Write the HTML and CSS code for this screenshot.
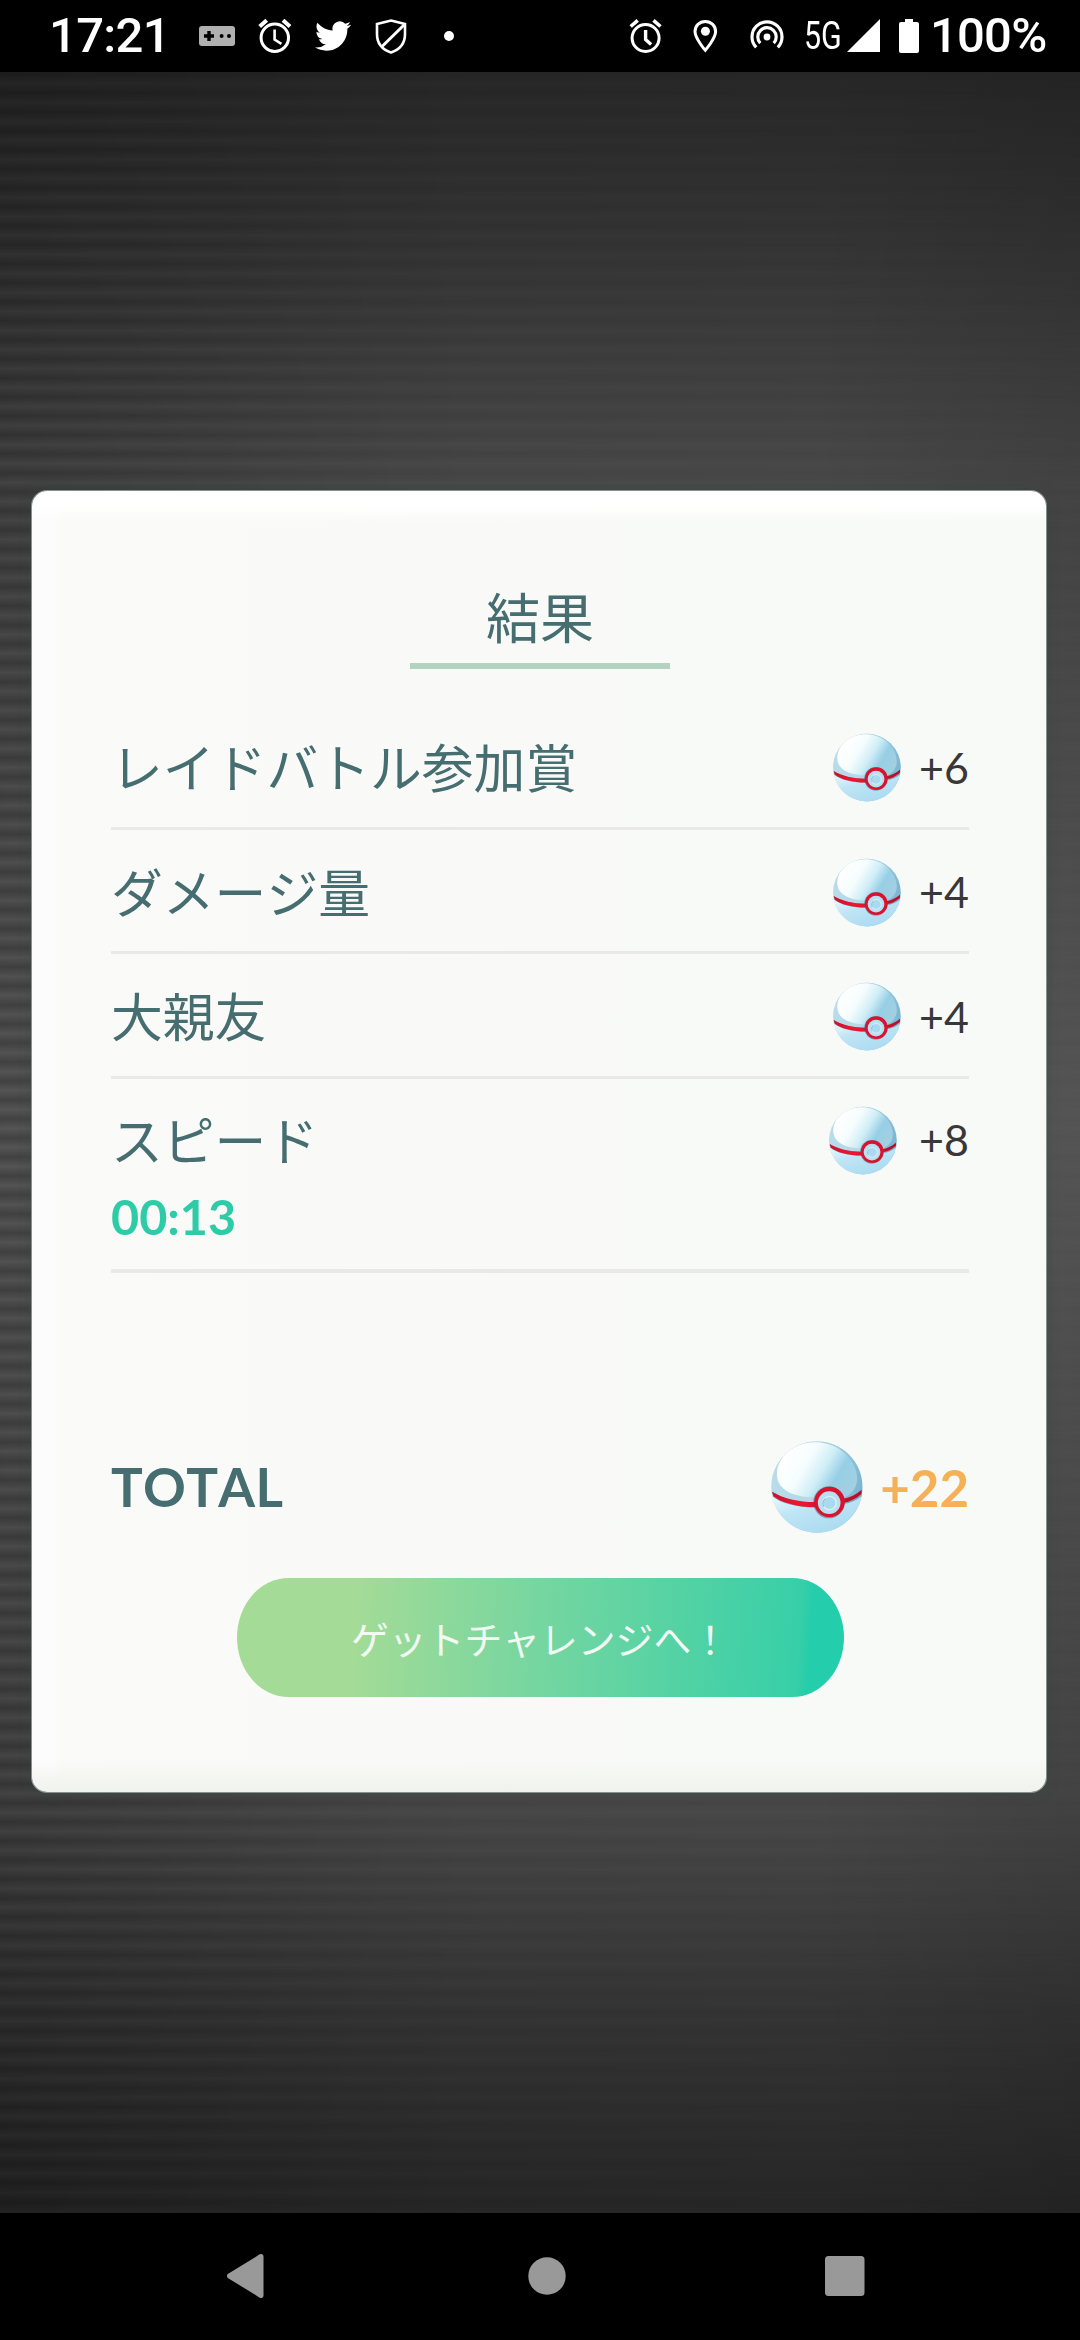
FILE: index.html
```html
<!DOCTYPE html>
<html lang="ja">
<head>
<meta charset="utf-8">
<title>結果</title>
<link rel="stylesheet" href="styles.css">
</head>
<body>
<svg class="defs" width="0" height="0" aria-hidden="true">
  <defs>
    <linearGradient id="shell" x1="0" y1="0.35" x2="1" y2="0.5">
      <stop offset="0" stop-color="#b9dcea"/>
      <stop offset="0.45" stop-color="#b4d9e8"/>
      <stop offset="1" stop-color="#79b4d2"/>
    </linearGradient>
    <linearGradient id="dome" x1="0.1" y1="0.25" x2="1" y2="0.62">
      <stop offset="0" stop-color="#ffffff"/>
      <stop offset="0.3" stop-color="#f6fdfe"/>
      <stop offset="0.55" stop-color="#cfeef6"/>
      <stop offset="0.76" stop-color="#97cfe6"/>
      <stop offset="1" stop-color="#a2cfe1"/>
    </linearGradient>
    <linearGradient id="base" x1="0" y1="0" x2="0.6" y2="0.9">
      <stop offset="0" stop-color="#f4fcff"/>
      <stop offset="0.5" stop-color="#bfe5f5"/>
      <stop offset="1" stop-color="#addcf1"/>
    </linearGradient>
    <linearGradient id="band" x1="0" y1="0" x2="1" y2="0">
      <stop offset="0" stop-color="#c9112c"/>
      <stop offset="0.3" stop-color="#f0162f"/>
      <stop offset="1" stop-color="#b50e28"/>
    </linearGradient>
    <clipPath id="round"><circle cx="229" cy="261" r="137"/></clipPath>
    <symbol id="ball" viewBox="92 123 275 276">
      <g clip-path="url(#round)">
        <rect x="92" y="122" width="276" height="280" fill="url(#shell)"/>
        <path d="M110 232C104 180 150 128 222 127c76-2 129 58 128 110-1 27-17 46-38 55H210c-50-2-95-22-100-60z" fill="url(#dome)"/>
        <path d="M92 280c30 22 75 36 136 37 60 1 108-14 140-40v125H92z" fill="url(#base)"/>
        <path d="M94 275c30 20 78 32 130 32h86c21-7 38-17 55-32l-1 13c-16 14-34 21-54 24l-86 10c-54 0-104-12-127-32z" fill="#44728f" opacity=".55"/>
        <path d="M95 275c32 20 78 31 130 31v16c-54 0-103-14-126-33zM308 296c21-4 38-12 56-27l-2 14c-17 14-33 22-54 26z" fill="url(#band)"/>
      </g>
      <ellipse cx="265" cy="307" rx="47" ry="48" fill="#315c79" opacity=".45"/>
      <circle cx="267" cy="306" r="46" fill="#d9122d"/>
      <circle cx="266" cy="308" r="34" fill="#b7e0f1"/>
      <circle cx="267" cy="309" r="20" fill="#abd9ef" stroke="#d8f2fc" stroke-width="4"/>
      <path d="M250 320a20 20 0 0 1 4-24" fill="none" stroke="#7db5d3" stroke-width="3"/>
    </symbol>
  </defs>
</svg>

<header class="status">
  <span class="clock">17:21</span>
  <div class="notices">
    <svg width="36" height="20" viewBox="0 0 36 20"><rect width="36" height="20" rx="3" fill="#b0b0b0"/><path d="M5 10h10M10 5v10" stroke="#000" stroke-width="3.4"/><circle cx="22.6" cy="10" r="2"/><circle cx="30" cy="10" r="2"/></svg>
    <svg width="34" height="36" viewBox="0 0 34 36" fill="none" stroke="#fff"><circle cx="16.8" cy="19.7" r="13.7" stroke-width="3"/><path d="M1.7 8.5l7-6.2M25 2.3l7 6.2" stroke-width="4"/><path d="M16.6 11.5v10l6.8 4.3" stroke-width="2.6"/></svg>
    <svg width="36" height="36" viewBox="0 0 24 24" fill="#fff"><path d="M23.953 4.57a10 10 0 01-2.825.775 4.958 4.958 0 002.163-2.723c-.951.555-2.005.959-3.127 1.184a4.92 4.92 0 00-8.384 4.482C7.69 8.095 4.067 6.13 1.64 3.162a4.822 4.822 0 00-.666 2.475c0 1.71.87 3.213 2.188 4.096a4.904 4.904 0 01-2.228-.616v.06a4.923 4.923 0 003.946 4.827 4.996 4.996 0 01-2.212.085 4.936 4.936 0 004.604 3.417 9.867 9.867 0 01-6.102 2.105c-.39 0-.779-.023-1.17-.067a13.995 13.995 0 007.557 2.209c9.053 0 13.998-7.496 13.998-13.985 0-.21 0-.42-.015-.63A9.935 9.935 0 0024 4.59z"/></svg>
    <svg width="34" height="36" viewBox="0 0 34 36" fill="none" stroke="#fff" stroke-width="2.6"><path d="M17 2.5L31 6v10c0 9-5 15.500-14 18.500C8 31.500 3 25 3 16V6z"/><path d="M30 7L8 28.500" stroke-width="3"/></svg>
    <svg class="more" width="10" height="10" viewBox="0 0 10 10"><circle cx="5" cy="5" r="5" fill="#fff"/></svg>
  </div>
  <div class="system">
    <svg width="34" height="36" viewBox="0 0 34 36" fill="none" stroke="#fff"><circle cx="16.600" cy="20" r="13.500" stroke-width="3"/><path d="M1.700 8.500l7-6.200M24.500 2.300l7 6.200" stroke-width="3.600"/><path d="M16.600 12v9.500l5.500 5" stroke-width="3.400"/></svg>
    <svg class="pin" width="27" height="36" viewBox="0 0 27 36"><path d="M13.300 3.400c-6 0-10.300 4.500-10.300 10.200 0 7 10.300 18.600 10.300 18.600s10.300-11.600 10.300-18.600c0-5.700-4.300-10.200-10.300-10.200z" fill="none" stroke="#fff" stroke-width="3"/><circle cx="13.400" cy="13.300" r="4.500" fill="#fff"/></svg>
    <svg class="spot" width="34" height="34" viewBox="0 0 34 34" fill="none" stroke="#fff" stroke-width="3.200"><path d="M6.200 28.300a15 15 0 1 1 21.600 0M10.300 24.200a9.200 9.200 0 1 1 13.400 0"/><circle cx="17" cy="18" r="3.400" fill="#fff" stroke="none"/></svg>
    <span class="net"><span>5G</span></span>
    <svg class="signal" width="34" height="34" viewBox="0 0 34 34"><path d="M0 33L33 0v33z" fill="#fff"/></svg>
    <svg class="battery" width="20" height="36" viewBox="0 0 20 36"><path d="M6 1h8v3h4a2 2 0 0 1 2 2v27a2 2 0 0 1-2 2H2a2 2 0 0 1-2-2V6a2 2 0 0 1 2-2h4z" fill="#fff"/></svg>
    <span class="level">100%</span>
  </div>
</header>

<main class="stage">
  <section class="card">
    <h1 class="title">結果</h1>
    <ul class="rows">
      <li class="row"><span class="label">レイドバトル参加賞</span><svg class="ball"><use href="#ball"/></svg><span class="count">+6</span></li>
      <li class="row"><span class="label">ダメージ量</span><svg class="ball"><use href="#ball"/></svg><span class="count">+4</span></li>
      <li class="row"><span class="label">大親友</span><svg class="ball"><use href="#ball"/></svg><span class="count">+4</span></li>
      <li class="row row-speed"><span class="label">スピード</span><svg class="ball"><use href="#ball"/></svg><span class="count">+8</span><span class="time">00:13</span></li>
    </ul>
    <div class="total"><span class="total-label">TOTAL</span><svg class="ball ball-large"><use href="#ball"/></svg><span class="total-count">+22</span></div>
    <button class="go">ゲットチャレンジへ！</button>
  </section>
</main>

<nav class="nav">
  <svg width="38" height="44" viewBox="0 0 38 44"><path d="M34 2.500L2.500 22 34 41.500z" fill="#999" stroke="#999" stroke-width="5" stroke-linejoin="round"/></svg>
  <svg class="home" width="38" height="38" viewBox="0 0 38 38"><circle cx="19" cy="19" r="18.700" fill="#999"/></svg>
  <svg class="recent" width="40" height="40" viewBox="0 0 40 40"><rect width="39.500" height="40" rx="3.500" fill="#999"/></svg>
</nav>
</body>
</html>
```
FILE: styles.css
```css
* { box-sizing: border-box; }
body {
  margin: 0;
  width: 1080px;
  height: 2340px;
  display: flex;
  flex-direction: column;
  background: #000;
  overflow: hidden;
  font-family: "Lato", "Noto Sans CJK JP", sans-serif;
}
svg { display: block; flex: none; }
.defs { position: absolute; }

.status {
  height: 72px;
  display: flex;
  align-items: center;
  color: #fff;
  font: 500 49px/72px Roboto, sans-serif;
}
.clock { width: 199px; padding-left: 49px; letter-spacing: -.7px; }
.notices { display: flex; align-items: center; gap: 23px; }
.more { margin-left: 13px; }
.system { margin-left: auto; width: 451px; display: flex; align-items: center; }
.pin { margin-left: 29px; }
.spot { margin-left: 31px; }
.net { width: 36px; margin-left: 20px; font-size: 38px; font-weight: 400; }
.net span { display: inline-block; transform: scaleX(.8); transform-origin: 0 50%; }
.signal { margin-left: 7px; }
.battery { margin-left: 18px; }
.level { margin-left: 11px; letter-spacing: -.8px; }

.stage {
  height: 2141px;
  padding: 419px 34px 0 32px;
  background:
    linear-gradient(90deg, rgba(0,0,0,.1), transparent 45%, transparent 75%, rgba(0,0,0,.1)),
    linear-gradient(#282828, #363636 180px, #4b4b4b 418px, #5e5e5e 1050px, #4b4b4b 1720px, #363636 1930px, #272727);
  position: relative;
}
.stage::before {
  content: "";
  position: absolute;
  inset: 0;
  background: repeating-linear-gradient(rgba(0,0,0,.22) 2px, rgba(0,0,0,0) 11.500px, rgba(0,0,0,.22) 21px);
  mask-image: linear-gradient(90deg, #000, rgba(0,0,0,.4) 35%, rgba(0,0,0,.08));
}

.card {
  position: relative;
  height: 1301px;
  padding: 78px 77px 0 79px;
  display: flex;
  flex-direction: column;
  border-radius: 15px;
  color: #466d70;
  font-kerning: none;
  background:
    linear-gradient(#fff, #fff 14px, rgba(255,255,255,0) 32px, rgba(240,242,236,0) 1270px, #f0f2ec),
    linear-gradient(90deg, #fcfcfd 22px, rgba(252,252,253,0) 30px),
    linear-gradient(90deg, #fafaf8, #f8faf7);
  box-shadow: 0 0 0 1px #87918c, 0 0 12px rgba(50,75,65,.55);
}
.title {
  align-self: center;
  width: 260px;
  height: 100px;
  margin: 0;
  border-bottom: 6px solid #b1d3c0;
  text-align: center;
  font: 400 54px/94px "Noto Sans CJK JP", sans-serif;
  font-kerning: none;
}
.rows { list-style: none; margin: 36px 0 0; padding: 0; }
.row {
  height: 124.500px;
  display: grid;
  grid-template-columns: 1fr 68px 68px;
  grid-template-rows: 122px;
  align-items: center;
  border-bottom: 3px solid #e9eae8;
}
.label {
  font: 400 51.800px/74px "Noto Sans CJK JP", sans-serif;
  font-kerning: none;
}
.row .ball, .count { margin-top: 3px; }
.ball { width: 68px; height: 69px; }
.count { text-align: right; color: #383838; font-size: 43px; line-height: 60px; }
.row-speed {
  height: 194.500px;
  grid-template-columns: 1fr 68px 72px;
  grid-template-rows: 118px 36px;
  border-bottom-width: 4px;
  padding-top: 1px;
  align-content: start;
}
.time { color: #2dcca7; font-weight: 700; font-size: 48.500px; line-height: 36px; }
.total {
  height: 92px;
  margin-top: 168px;
  display: flex;
  align-items: center;
  font-weight: 700;
  font-size: 52px;
}
.total-label { flex: 1; font-size: 53px; letter-spacing: .3px; padding-bottom: 2px; }
.ball-large { width: 92px; height: 92px; }
.total-count { width: 106px; text-align: right; color: #f4b155; font-size: 51px; }
.go {
  align-self: center;
  width: 607px;
  height: 119px;
  margin: 45px 0 0;
  padding: 0;
  border: 0;
  border-radius: 52px / 60px;
  color: #f2fbf3;
  background: linear-gradient(94deg, #a3db97 20%, #75d6a0 50%, #37cfa8 92%, #24cdab 94%);
  font: 400 37.800px/119px "Noto Sans CJK JP", sans-serif;
  font-kerning: none;
}

.nav {
  flex: 1;
  display: flex;
  align-items: center;
  padding: 0 0 2px 227px;
}
.home { margin-left: 263px; }
.recent { margin-left: 259px; }
```
